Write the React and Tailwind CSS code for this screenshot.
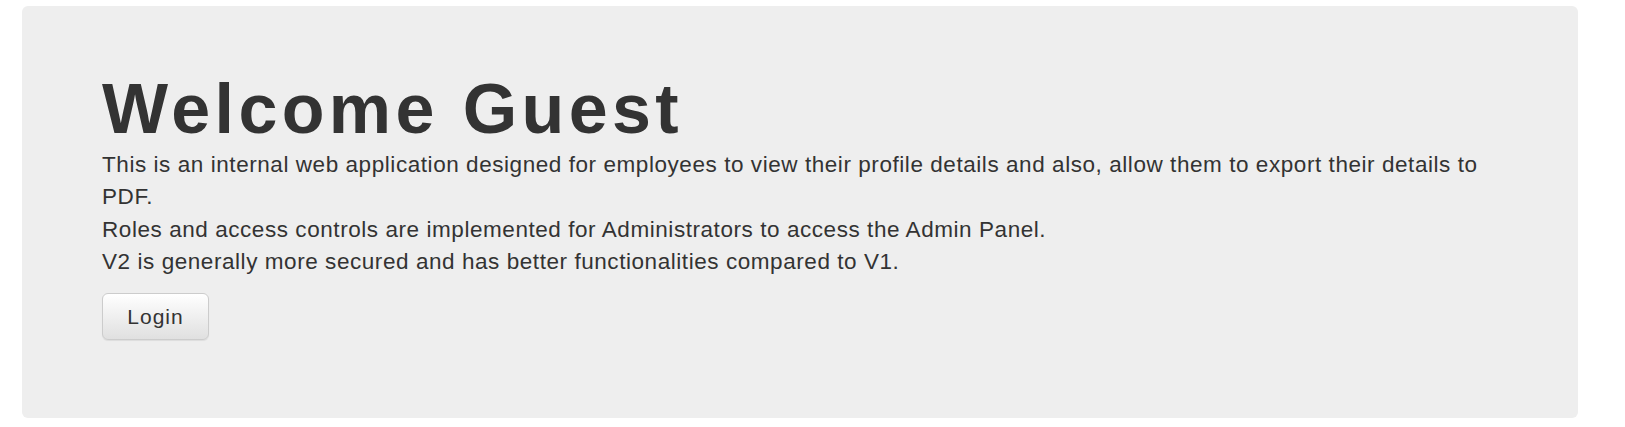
import React from 'react';

const lines = [
  'This is an internal web application designed for employees to view their profile details and also, allow them to export their details to PDF.',
  'Roles and access controls are implemented for Administrators to access the Admin Panel.',
  'V2 is generally more secured and has better functionalities compared to V1.'
];

const App = () => {
  return (
    <div className="min-h-screen bg-white pt-[6px] pl-[22px] font-['Liberation_Sans',Arial,sans-serif] text-[#333]">
      <div className="w-[1556px] h-[412px] rounded-[6px] bg-[#eeeeee] pl-[80px] pr-[80px] pt-[65px]">
        <h1 className="text-[70px] leading-[1.1] font-bold tracking-[4.4px]">Welcome Guest</h1>
        <div className="mt-[1px] text-[22.5px] leading-[32.3px] tracking-[0.56px]">
          {lines.map((line, i) => (
            <p key={i}>{line}</p>
          ))}
        </div>
        <button className="mt-[15px] w-[107px] h-[47px] rounded-[6px] border border-[#ccc] bg-gradient-to-b from-white to-[#e0e0e0] text-[21px] tracking-[1px] text-[#333] shadow-[inset_0_1px_0_rgba(255,255,255,0.15),0_1px_1px_rgba(0,0,0,0.075)]">
          Login
        </button>
      </div>
    </div>
  );
};

export default App;
